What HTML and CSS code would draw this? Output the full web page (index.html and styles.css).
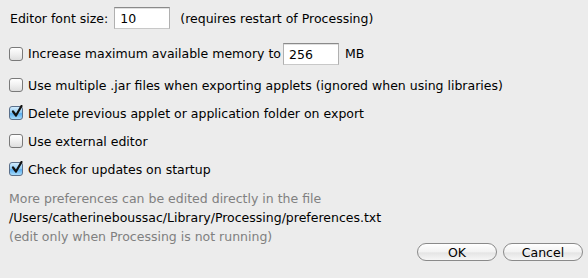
FILE: index.html
```html
<!DOCTYPE html>
<html>
<head>
<meta charset="utf-8">
<link rel="stylesheet" href="styles.css">
</head>
<body>
<div class="dialog">
  <div class="row row-font">
    <span class="label">Editor font size:</span>
    <span class="field field-font">10</span>
    <span class="label note">(requires restart of Processing)</span>
  </div>
  <div class="row row-mem">
    <span class="cb"></span>
    <span class="label">Increase maximum available memory to</span>
    <span class="field field-mem">256</span>
    <span class="label mb">MB</span>
  </div>
  <div class="row">
    <span class="cb"></span>
    <span class="label">Use multiple .jar files when exporting applets (ignored when using libraries)</span>
  </div>
  <div class="row">
    <span class="cb checked"><svg viewBox="0 0 14 14" width="14" height="14"><path d="M3 6.5 L6 10.5 L11.5 1" fill="none" stroke="#111" stroke-width="2.2" stroke-linecap="round" stroke-linejoin="round"/></svg></span>
    <span class="label">Delete previous applet or application folder on export</span>
  </div>
  <div class="row">
    <span class="cb"></span>
    <span class="label">Use external editor</span>
  </div>
  <div class="row">
    <span class="cb checked"><svg viewBox="0 0 14 14" width="14" height="14"><path d="M3 6.5 L6 10.5 L11.5 1" fill="none" stroke="#111" stroke-width="2.2" stroke-linecap="round" stroke-linejoin="round"/></svg></span>
    <span class="label">Check for updates on startup</span>
  </div>
  <div class="info">
    <div class="muted">More preferences can be edited directly in the file</div>
    <div class="path">/Users/catherineboussac/Library/Processing/preferences.txt</div>
    <div class="muted">(edit only when Processing is not running)</div>
  </div>
  <div class="buttons">
    <span class="btn">OK</span>
    <span class="btn">Cancel</span>
  </div>
</div>
</body>
</html>
```
FILE: styles.css
```css
html, body {
  margin: 0;
  padding: 0;
  background: #ececec;
}
.dialog {
  width: 588px;
  height: 278px;
  box-sizing: border-box;
  padding: 7px 0 0 9px;
  font-family: "DejaVu Sans", sans-serif;
  font-size: 12.5px;
  color: #000;
  position: relative;
}
.row {
  display: flex;
  align-items: center;
  height: 28px;
}
.row-font {
  height: 22px;
  padding-left: 1px;
  margin-bottom: 14px;
}
.row-mem {
  height: 21px;
  margin-bottom: 7px;
}
.field {
  box-sizing: border-box;
  height: 22px;
  background: #fff;
  border: 1px solid #9a9a9a;
  border-top-color: #8a8a8a;
  border-left-color: #b0b0b0;
  border-right-color: #b0b0b0;
  border-bottom-color: #c8c8c8;
  box-shadow: inset 0 1px 0 #e0e0e0;
  padding: 1px 0 0 5px;
  display: flex;
  align-items: center;
}
.field-font {
  width: 56px;
  margin-left: 6px;
  margin-right: 10px;
}
.field-mem {
  width: 56px;
  margin-left: 2px;
  margin-right: 6px;
}
.cb {
  box-sizing: border-box;
  width: 14px;
  height: 14px;
  border: 1px solid #7a7a7a;
  border-radius: 3px;
  background: linear-gradient(#ffffff, #f0f0f0 50%, #dedede);
  margin-right: 5px;
  flex: none;
  position: relative;
}
.cb.checked {
  background: linear-gradient(#d2ecfd, #8cc8f2 50%, #5aaef0 55%, #a8dcfb);
  border-color: #5a6f8a;
}
.cb svg {
  position: absolute;
  left: 0;
  top: -2px;
}
.info {
  margin-top: 6px;
  line-height: 19px;
}
.muted {
  color: #808080;
}
.path {
  color: #000;
}
.buttons {
  position: absolute;
  right: 5px;
  top: 243px;
  display: flex;
  gap: 6px;
}
.btn {
  box-sizing: border-box;
  width: 80px;
  height: 18px;
  border: 1px solid #8a8a8a;
  border-radius: 9px;
  background: linear-gradient(#ffffff, #f2f2f2 50%, #e4e4e4 55%, #f6f6f6);
  display: flex;
  align-items: center;
  justify-content: center;
  font-size: 12.5px;
}
```
